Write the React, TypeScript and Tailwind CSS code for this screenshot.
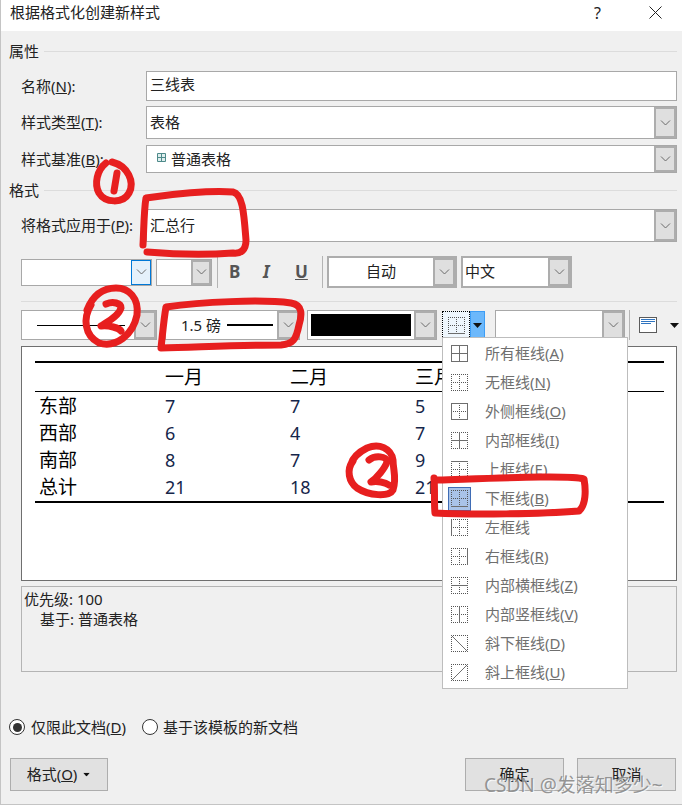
import React from 'react';

const FONT = 'font-["Noto_Sans","Noto_Sans_CJK_SC",sans-serif]';

function Chevron() {
  return (
    <svg width="11" height="6" viewBox="0 0 11 6" aria-hidden>
      <path d="M1 0.5 L5.5 5 L10 0.5" fill="none" stroke="#6b6b6b" strokeWidth="1" />
    </svg>
  );
}

function Caret({ className = '' }: { className?: string }) {
  return (
    <svg width="9" height="5" viewBox="0 0 9 5" className={className} aria-hidden>
      <path d="M0 0 H9 L4.5 5 Z" fill="#111" />
    </svg>
  );
}

function ArrowBtn({ className = 'w-[22px]' }: { className?: string }) {
  return (
    <span className={`${className} flex h-full shrink-0 items-center justify-center border-2 border-[#adadad] bg-[#dfdfdf]`}>
      <Chevron />
    </span>
  );
}

/** 콤보박스: 흰 입력 영역 + 오른쪽 화살표 버튼 */
function Combo({ className = '', children, center }: { className?: string; children?: React.ReactNode; center?: boolean }) {
  return (
    <div className={`flex border border-[#a8a8a8] bg-white ${className}`}>
      <div className={`flex min-w-0 flex-1 items-center ${center ? 'justify-center' : 'pl-[3px]'}`}>{children}</div>
      <ArrowBtn />
    </div>
  );
}

function Section({ title, className = '' }: { title: string; className?: string }) {
  return (
    <div className={`flex h-5 items-center pl-[9px] pr-[5px] text-[15px] leading-5 text-[#222] ${className}`}>
      <span>{title}</span>
      <span className="ml-[5px] h-px flex-1 bg-[#dcdcdc]" />
    </div>
  );
}

function Row({ label, keyChar, className = '', children }: { label: string; keyChar: string; className?: string; children: React.ReactNode }) {
  return (
    <div className={`flex items-center pl-[21px] pr-[5px] ${className}`}>
      <span className="w-[125px] shrink-0 whitespace-nowrap text-[15px] text-[#222]">
        {label}(<u>{keyChar}</u>):
      </span>
      {children}
    </div>
  );
}

function Sep({ className = '' }: { className?: string }) {
  return <span className={`h-full w-px shrink-0 bg-[#b4b4b4] ${className}`} />;
}

type IconKind = 'all' | 'none' | 'outer' | 'inner' | 'top' | 'bottom' | 'left' | 'right' | 'h' | 'v' | 'down' | 'up';

const SOLID: Record<IconKind, string> = {
  all: 'M0 0.5H17M0 16.5H17M0.5 0V17M16.5 0V17M8.5 0V17M0 8.5H17',
  none: '',
  outer: 'M0 0.5H17M0 16.5H17M0.5 0V17M16.5 0V17',
  inner: 'M8.5 0V17M0 8.5H17',
  top: 'M0 0.5H17',
  bottom: 'M0 16.5H17',
  left: 'M0.5 0V17',
  right: 'M16.5 0V17',
  h: 'M0 8.5H17',
  v: 'M8.5 0V17',
  down: 'M0.5 0.5L16.5 16.5',
  up: 'M0.5 16.5L16.5 0.5',
};

function BorderIcon({ kind }: { kind: IconKind }) {
  const diagonal = kind === 'down' || kind === 'up';
  return (
    <svg width="17" height="17" viewBox="0 0 17 17" aria-hidden>
      <path
        d={diagonal ? 'M0 0.5H17M0 16.5H17M0.5 0V17M16.5 0V17' : 'M0 0.5H17M0 16.5H17M0.5 0V17M16.5 0V17M8.5 0V17M0 8.5H17'}
        fill="none"
        stroke="#555"
        strokeWidth="1"
        strokeDasharray="1 1"
      />
      {SOLID[kind] && <path d={SOLID[kind]} fill="none" stroke="#6e6e6e" strokeWidth="1" />}
    </svg>
  );
}

const menuItems: { kind: IconKind; label: string; key?: string }[] = [
  { kind: 'all', label: '所有框线', key: 'A' },
  { kind: 'none', label: '无框线', key: 'N' },
  { kind: 'outer', label: '外侧框线', key: 'O' },
  { kind: 'inner', label: '内部框线', key: 'I' },
  { kind: 'top', label: '上框线', key: 'E' },
  { kind: 'bottom', label: '下框线', key: 'B' },
  { kind: 'left', label: '左框线' },
  { kind: 'right', label: '右框线', key: 'R' },
  { kind: 'h', label: '内部横框线', key: 'Z' },
  { kind: 'v', label: '内部竖框线', key: 'V' },
  { kind: 'down', label: '斜下框线', key: 'D' },
  { kind: 'up', label: '斜上框线', key: 'U' },
];

const tableRows = [
  ['东部', '7', '7', '5'],
  ['西部', '6', '4', '7'],
  ['南部', '8', '7', '9'],
  ['总计', '21', '18', '21'],
];

function BorderMenu() {
  return (
    <div className="absolute left-[441px] top-[337px] w-[186px] border border-[#bdbdbd] bg-white pt-[1px] pb-[1px]">
      {menuItems.map(item => (
        <div key={item.kind} className="flex h-[29px] items-center text-[15px] text-[#6f6f6f]">
          <span
            className={`ml-[5px] flex h-[24px] w-[23px] items-center justify-center border ${
              item.kind === 'bottom' ? 'border-[#3f6cb5] bg-[#a9c3e8]' : 'border-transparent'
            }`}
          >
            <BorderIcon kind={item.kind} />
          </span>
          <span className="ml-[14px] whitespace-nowrap">
            {item.label}
            {item.key && (
              <>
                (<u>{item.key}</u>)
              </>
            )}
          </span>
        </div>
      ))}
    </div>
  );
}

/** 스크린샷 위에 손으로 그린 빨간 표시 */
function RedMarks() {
  return (
    <svg className="pointer-events-none absolute left-0 top-0" width="682" height="805" viewBox="0 0 682 805" aria-hidden>
      <g fill="none" stroke="#e71f1f" strokeWidth="7" strokeLinecap="round" strokeLinejoin="round">
        <path d="M105 163 C96 170 93 184 98 193 C104 203 122 204 128 193 C134 182 127 166 111 162" />
        <path d="M116 173 L113 191" />
        <path d="M142 245 C143 225 143 210 145 198 C170 194 210 190 232 192 C242 194 243 215 245 240 C245 250 240 254 232 253 C205 255 170 254 146 252" />
        <path d="M90 305 C82 318 83 335 98 343 C115 348 132 335 136 315 C138 298 128 288 115 288 C102 288 92 295 86 310" />
        <path d="M105 304 C112 301 120 303 120 308 C118 316 106 322 100 326 C108 325 118 328 120 331" />
        <path d="M160 348 C162 330 163 318 165 307 C200 302 260 299 290 303 C302 305 301 315 298 325 C295 340 292 344 280 345 C240 345 200 347 160 348" />
        <path d="M352 461 C345 470 348 482 356 488 C368 496 388 497 392 490 C396 478 392 470 392 460 C390 448 378 443 366 448 C358 452 352 458 350 464" />
        <path d="M368 460 C374 455 386 456 386 462 C384 468 376 478 370 482 C376 481 384 482 388 485" />
        <path d="M433 478 C434 490 433 505 434 513 C470 515 540 514 578 511 C585 505 585 490 583 479 C570 475 500 478 437 480" />
      </g>
    </svg>
  );
}

export default function App() {
  return (
    <div className={`relative h-[805px] w-[682px] overflow-hidden border-b border-l border-[#c4c4c4] bg-[#f0f0f0] ${FONT}`}>
      <div className="-ml-px flex h-[31px] items-center bg-white pb-[6px] pl-[10px] pr-[20px] text-[15px] text-[#222]">
        <span className="flex-1">根据格式化创建新样式</span>
        <span className="mr-[48px] text-[16px]">?</span>
        <svg width="13" height="13" viewBox="0 0 13 13" aria-hidden>
          <path d="M0.5 0.5L12.5 12.5M12.5 0.5L0.5 12.5" stroke="#222" strokeWidth="1" />
        </svg>
      </div>

      <div className="-ml-px flex flex-col">
        <Section title="属性" className="mt-[10px]" />

        <Row label="名称" keyChar="N" className="mt-[10px] h-[30px]">
          <div className="flex h-full flex-1 items-center border border-[#a8a8a8] bg-white pb-[3px] pl-[3px] text-[15px] text-[#222]">三线表</div>
        </Row>
        <Row label="样式类型" keyChar="T" className="mt-[5px] h-[33px]">
          <Combo className="h-full flex-1"><span className="text-[15px] text-[#222]">表格</span></Combo>
        </Row>
        <Row label="样式基准" keyChar="B" className="mt-[6px] h-[28px]">
          <Combo className="h-full flex-1">
            <span className="ml-[7px] flex items-center text-[15px] text-[#222]">
              <svg width="9" height="9" viewBox="0 0 9 9" className="-mt-[3px]" aria-hidden>
                <path d="M0.5 0.5H8.5V8.5H0.5Z M4.5 0.5V8.5 M0.5 4.5H8.5" fill="#dfeeee" stroke="#4e8a8a" strokeWidth="1" />
              </svg>
              <span className="ml-[5px]">普通表格</span>
            </span>
          </Combo>
        </Row>

        <Section title="格式" className="mt-[7px]" />

        <Row label="将格式应用于" keyChar="P" className="mt-[9px] h-[33px]">
          <Combo className="h-full flex-1"><span className="text-[15px] text-[#222]">汇总行</span></Combo>
        </Row>

        <div className="mt-[14px] flex h-[32px] items-center pl-[21px] text-[#222]">
          <div className="flex h-[27px] w-[131px] justify-end border border-[#a8a8a8] bg-white">
            <span className="flex h-full w-[20px] items-center justify-center border border-[#0078d7] bg-[#e5f1fb]">
              <Chevron />
            </span>
          </div>
          <div className="ml-[4px] flex h-[27px] w-[56px] justify-end border border-[#a8a8a8] bg-white">
            <ArrowBtn className="w-[20px]" />
          </div>
          <Sep className="ml-[5px]" />
          <span className="ml-[11px] w-[12px] text-[17px] font-bold text-[#555]">B</span>
          <span className="ml-[22px] w-[12px] text-[17px] font-bold italic text-[#555]">I</span>
          <span className="ml-[20px] w-[12px] text-[17px] font-bold text-[#555] underline">U</span>
          <Sep className="ml-[15px]" />
          <div className="ml-[4px] flex h-full w-[130px] border-2 border-[#adadad] bg-white">
            <span className="flex flex-1 items-center justify-center pb-[2px] text-[15px]">自动</span>
            <ArrowBtn />
          </div>
          <div className="ml-[4px] flex h-full w-[111px] border-2 border-[#adadad] bg-white">
            <span className="flex flex-1 items-center pb-[2px] pl-[2px] text-[15px]">中文</span>
            <ArrowBtn />
          </div>
        </div>

        <div className="ml-[21px] mr-[5px] mt-[13px] h-px bg-[#dcdcdc]" />

        <div className="mt-[8px] flex h-[30px] items-center pl-[21px] text-[#222]">
          <Combo className="h-full w-[136px]">
            <span className="ml-[12px] h-px w-[88px] bg-black" />
          </Combo>
          <Combo className="ml-[8px] h-full w-[135px]">
            <span className="ml-[12px] flex items-center text-[15px]">
              1.5 磅<span className="ml-[6px] h-[2px] w-[46px] bg-black" />
            </span>
          </Combo>
          <div className="ml-[7px] flex h-full w-[130px] border border-[#a8a8a8] bg-white">
            <span className="flex-1 p-[3px]"><span className="block h-full w-full bg-black" /></span>
            <ArrowBtn />
          </div>
          <div className="ml-[5px] flex h-[28px] w-[43px]">
            <span className="flex w-[28px] items-center justify-center border border-dotted border-black bg-[#eef6fd]">
              <BorderIcon kind="bottom" />
            </span>
            <span className="flex flex-1 items-center justify-center border border-[#3d9df5] bg-[#6cb8fb]">
              <Caret />
            </span>
          </div>
          <Combo className="ml-[10px] h-full w-[130px]" />
          <Sep className="ml-[4px]" />
          <span className="ml-[9px]">
            <svg width="18" height="16" viewBox="0 0 18 16" aria-hidden>
              <rect x="0.5" y="0.5" width="17" height="15" fill="#fff" stroke="#5b5b5b" />
              <path d="M2 2.5H16M2 4.5H16M2 6.5H12" stroke="#2f74c0" strokeWidth="1" />
            </svg>
          </span>
          <Caret className="ml-[13px]" />
        </div>

        <div className="ml-[21px] mr-[5px] mt-[6px] h-[235px] border border-[#6f6f6f] bg-white pl-[13px] pr-[12px] pt-[14px]">
          <div className="border-y-2 border-black">
            <div className="grid h-[29px] grid-cols-[130px_125px_125px_1fr] items-center border-b border-black text-[19px] text-black">
              <span />
              <span>一月</span>
              <span>二月</span>
              <span>三月</span>
            </div>
            <div className="pb-[1px]">
              {tableRows.map(row => (
                <div key={row[0]} className="grid h-[27px] grid-cols-[130px_125px_125px_1fr] items-center pb-[2px] text-[18px] text-[#16264a]">
                  <span className="pl-[4px] text-[19px] text-black">{row[0]}</span>
                  <span>{row[1]}</span>
                  <span>{row[2]}</span>
                  <span>{row[3]}</span>
                </div>
              ))}
            </div>
          </div>
        </div>

        <div className="ml-[21px] mr-[5px] mt-[5px] h-[86px] border border-[#b4b4b4] pl-[2px] pt-[2px] text-[15px] leading-[20px] text-[#222]">
          <div>优先级: 100</div>
          <div className="pl-[16px]">基于: 普通表格</div>
        </div>

        <div className="mt-[45px] flex h-5 items-center pl-[9px] text-[15px] text-[#222]">
          <span className="flex h-[16px] w-[16px] items-center justify-center rounded-full border border-[#333] bg-white">
            <span className="h-[9px] w-[9px] rounded-full bg-[#333]" />
          </span>
          <span className="ml-[6px]">仅限此文档(<u>D</u>)</span>
          <span className="ml-[16px] h-[16px] w-[16px] rounded-full border border-[#333] bg-white" />
          <span className="ml-[5px]">基于该模板的新文档</span>
        </div>

        <div className="mt-[21px] flex h-[33px] pl-[10px] pr-[6px] text-[15px] text-[#222]">
          <div className="flex h-full w-[98px] items-center justify-center border border-[#adadad] bg-[#e1e1e1]">
            格式(<u>O</u>)
            <Caret className="ml-[5px] scale-75" />
          </div>
          <div className="ml-auto flex h-full w-[99px] items-center justify-center border border-[#adadad] bg-[#e1e1e1]">确定</div>
          <div className="ml-[13px] flex h-full w-[99px] items-center justify-center border border-[#adadad] bg-[#e1e1e1]">取消</div>
        </div>
      </div>

      <BorderMenu />
      <RedMarks />

      <span className="absolute left-[483px] top-[773px] whitespace-nowrap text-[19px] leading-6 text-[#8c8c8c] opacity-90 [text-shadow:1px_1px_1px_#ffffff]">
        CSDN @发落知多少~
      </span>
    </div>
  );
}
